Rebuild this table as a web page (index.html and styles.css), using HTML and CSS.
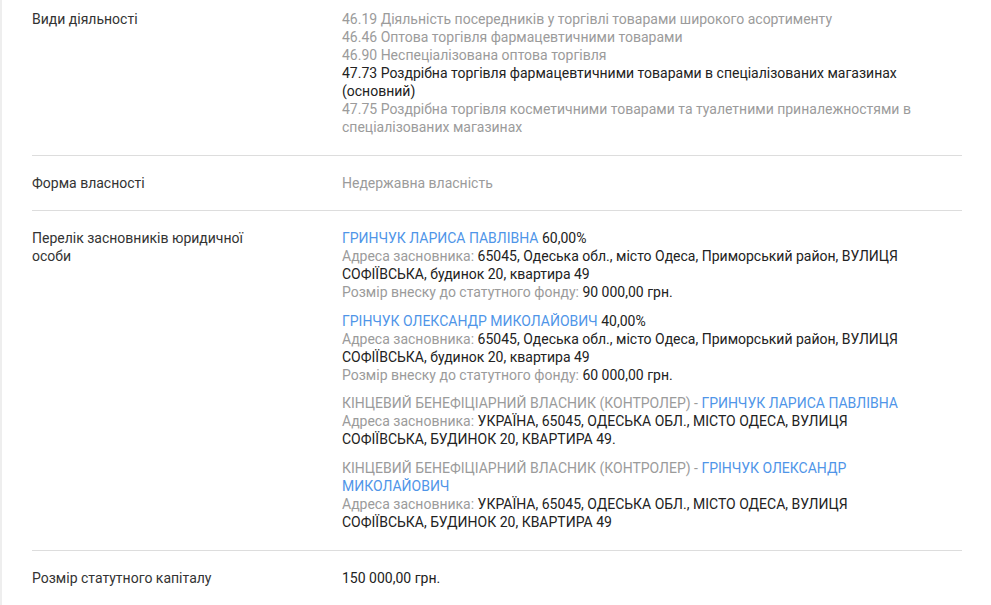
FILE: index.html
```html
<!DOCTYPE html>
<html lang="uk">
<head>
<meta charset="utf-8">
<link rel="stylesheet" href="styles.css">
</head>
<body>
<div class="page">
  <div class="list">
    <div class="row first">
      <div class="label">Види діяльності</div>
      <div class="value">
        <div class="muted">46.19 Діяльність посередників у торгівлі товарами широкого асортименту</div>
        <div class="muted">46.46 Оптова торгівля фармацевтичними товарами</div>
        <div class="muted">46.90 Неспеціалізована оптова торгівля</div>
        <div class="dark">47.73 Роздрібна торгівля фармацевтичними товарами в спеціалізованих магазинах (основний)</div>
        <div class="muted">47.75 Роздрібна торгівля косметичними товарами та туалетними приналежностями в спеціалізованих магазинах</div>
      </div>
    </div>
    <div class="row">
      <div class="label">Форма власності</div>
      <div class="value"><div class="muted">Недержавна власність</div></div>
    </div>
    <div class="row">
      <div class="label">Перелік засновників юридичної особи</div>
      <div class="value blocks">
        <div class="block">
          <div><a class="link" href="#">ГРИНЧУК ЛАРИСА ПАВЛІВНА</a> <span class="dark">60,00%</span></div>
          <div><span class="muted">Адреса засновника:</span> <span class="dark">65045, Одеська обл., місто Одеса, Приморський район, ВУЛИЦЯ СОФІЇВСЬКА, будинок 20, квартира 49</span></div>
          <div><span class="muted">Розмір внеску до статутного фонду:</span> <span class="dark">90 000,00 грн.</span></div>
        </div>
        <div class="block">
          <div><a class="link" href="#">ГРІНЧУК ОЛЕКСАНДР МИКОЛАЙОВИЧ</a> <span class="dark">40,00%</span></div>
          <div><span class="muted">Адреса засновника:</span> <span class="dark">65045, Одеська обл., місто Одеса, Приморський район, ВУЛИЦЯ СОФІЇВСЬКА, будинок 20, квартира 49</span></div>
          <div><span class="muted">Розмір внеску до статутного фонду:</span> <span class="dark">60 000,00 грн.</span></div>
        </div>
        <div class="block">
          <div><span class="muted">КІНЦЕВИЙ БЕНЕФІЦІАРНИЙ ВЛАСНИК (КОНТРОЛЕР) - </span><a class="link" href="#">ГРИНЧУК ЛАРИСА ПАВЛІВНА</a></div>
          <div><span class="muted">Адреса засновника:</span> <span class="dark">УКРАЇНА, 65045, ОДЕСЬКА ОБЛ., МІСТО ОДЕСА, ВУЛИЦЯ СОФІЇВСЬКА, БУДИНОК 20, КВАРТИРА 49.</span></div>
        </div>
        <div class="block">
          <div><span class="muted">КІНЦЕВИЙ БЕНЕФІЦІАРНИЙ ВЛАСНИК (КОНТРОЛЕР) - </span><a class="link" href="#">ГРІНЧУК ОЛЕКСАНДР МИКОЛАЙОВИЧ</a></div>
          <div><span class="muted">Адреса засновника:</span> <span class="dark">УКРАЇНА, 65045, ОДЕСЬКА ОБЛ., МІСТО ОДЕСА, ВУЛИЦЯ СОФІЇВСЬКА, БУДИНОК 20, КВАРТИРА 49</span></div>
        </div>
      </div>
    </div>
    <div class="row">
      <div class="label">Розмір статутного капіталу</div>
      <div class="value"><div class="dark">150 000,00 грн.</div></div>
    </div>
  </div>
</div>
</body>
</html>
```

FILE: styles.css
```css
html, body {
  margin: 0;
  padding: 0;
  background: #ffffff;
}
body {
  font-family: Roboto, "Noto Sans", sans-serif;
  font-size: 14px;
  line-height: 18px;
  color: #333333;
}
.page {
  border-left: 2px solid #eeeeee;
  min-height: 605px;
  box-sizing: border-box;
  padding: 0 29px 0 30px;
}
.list {
  display: flex;
  flex-direction: column;
}
.row {
  display: grid;
  grid-template-columns: 310px 1fr;
  padding: 18px 0 18px;
  border-top: 1px solid #dddddd;
}
.row.first {
  border-top: none;
  padding-top: 10px;
  padding-bottom: 19px;
}
.label {
  color: #333333;
  max-width: 232px;
}
.value {
  padding-right: 40px;
}
.blocks {
  display: flex;
  flex-direction: column;
  gap: 10.7px;
  padding-bottom: 1px;
}
.muted {
  color: #9b9b9b;
}
.dark {
  color: #222222;
}
.link {
  color: #4f95e8;
  text-decoration: none;
}
```
